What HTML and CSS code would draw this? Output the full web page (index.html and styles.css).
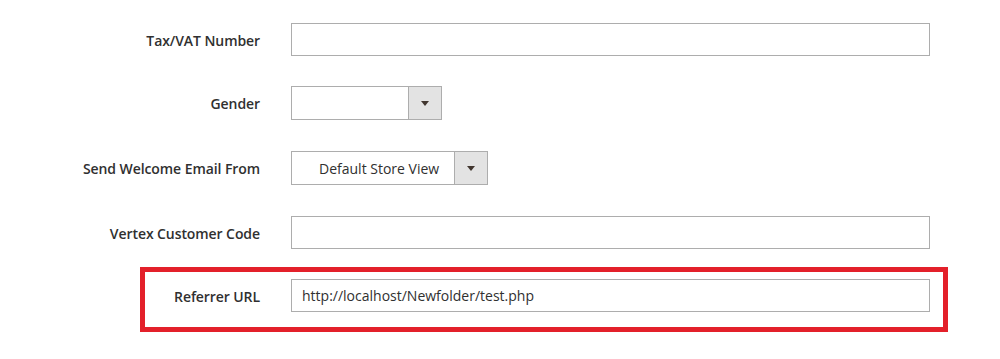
FILE: index.html
```html
<!DOCTYPE html>
<html lang="en">
<head>
<meta charset="utf-8">
<title>Customer Account Information</title>
<link rel="stylesheet" href="styles.css">
</head>
<body>
<form class="fieldset">
  <div class="field">
    <label class="label">Tax/VAT Number</label>
    <div class="control"><div class="input"></div></div>
  </div>
  <div class="field field-select">
    <label class="label">Gender</label>
    <div class="control">
      <div class="select select-gender"><span class="select-value"></span><span class="select-arrow"></span></div>
    </div>
  </div>
  <div class="field field-select">
    <label class="label">Send Welcome Email From</label>
    <div class="control">
      <div class="select select-store"><span class="select-value">Default Store View</span><span class="select-arrow"></span></div>
    </div>
  </div>
  <div class="field">
    <label class="label">Vertex Customer Code</label>
    <div class="control"><div class="input"></div></div>
  </div>
  <div class="field field-highlight">
    <label class="label">Referrer URL</label>
    <div class="control"><div class="input">http://localhost/Newfolder/test.php</div></div>
    <div class="highlight-box"></div>
  </div>
</form>
</body>
</html>
```

FILE: styles.css
```css
html, body {
  margin: 0;
  padding: 0;
  background: #ffffff;
}

body {
  font-family: "Open Sans", "Liberation Sans", sans-serif;
  color: #303030;
  font-size: 14px;
}

.fieldset {
  width: 930px;
  padding-top: 23px;
  padding-bottom: 47px;
  display: flex;
  flex-direction: column;
  gap: 30px;
}

.field {
  display: grid;
  grid-template-columns: 260px 1fr;
  column-gap: 31px;
  align-items: center;
}

.field-select {
  padding-bottom: 1px;
}

.label {
  text-align: right;
  font-weight: 600;
  font-size: 14px;
  letter-spacing: -0.08px;
  color: #303030;
  padding-top: 1px;
}

.input {
  box-sizing: border-box;
  height: 33px;
  border: 1px solid #adadad;
  background: #fff;
  padding: 0 10px;
  display: flex;
  align-items: center;
  font-size: 14px;
  color: #303030;
}

.select {
  box-sizing: border-box;
  height: 34px;
  border: 1px solid #adadad;
  background: #fff;
  display: flex;
  align-items: stretch;
}

.select-gender {
  width: 151px;
}

.select-store {
  width: 197px;
}

.select-value {
  flex: 1;
  display: flex;
  align-items: center;
  padding-left: 27px;
  font-size: 14px;
  color: #303030;
}

.select-arrow {
  width: 32px;
  background: #e3e3e3;
  border-left: 1px solid #adadad;
  display: flex;
  align-items: center;
  justify-content: center;
}

.select-arrow::before {
  content: "";
  width: 0;
  height: 0;
  border-left: 4px solid transparent;
  border-right: 4px solid transparent;
  border-top: 5px solid #41362f;
}

.field-highlight {
  position: relative;
}

.highlight-box {
  position: absolute;
  top: -12px;
  left: 140px;
  right: -18px;
  bottom: -20px;
  border: 5px solid #e3202a;
  pointer-events: none;
}
```
